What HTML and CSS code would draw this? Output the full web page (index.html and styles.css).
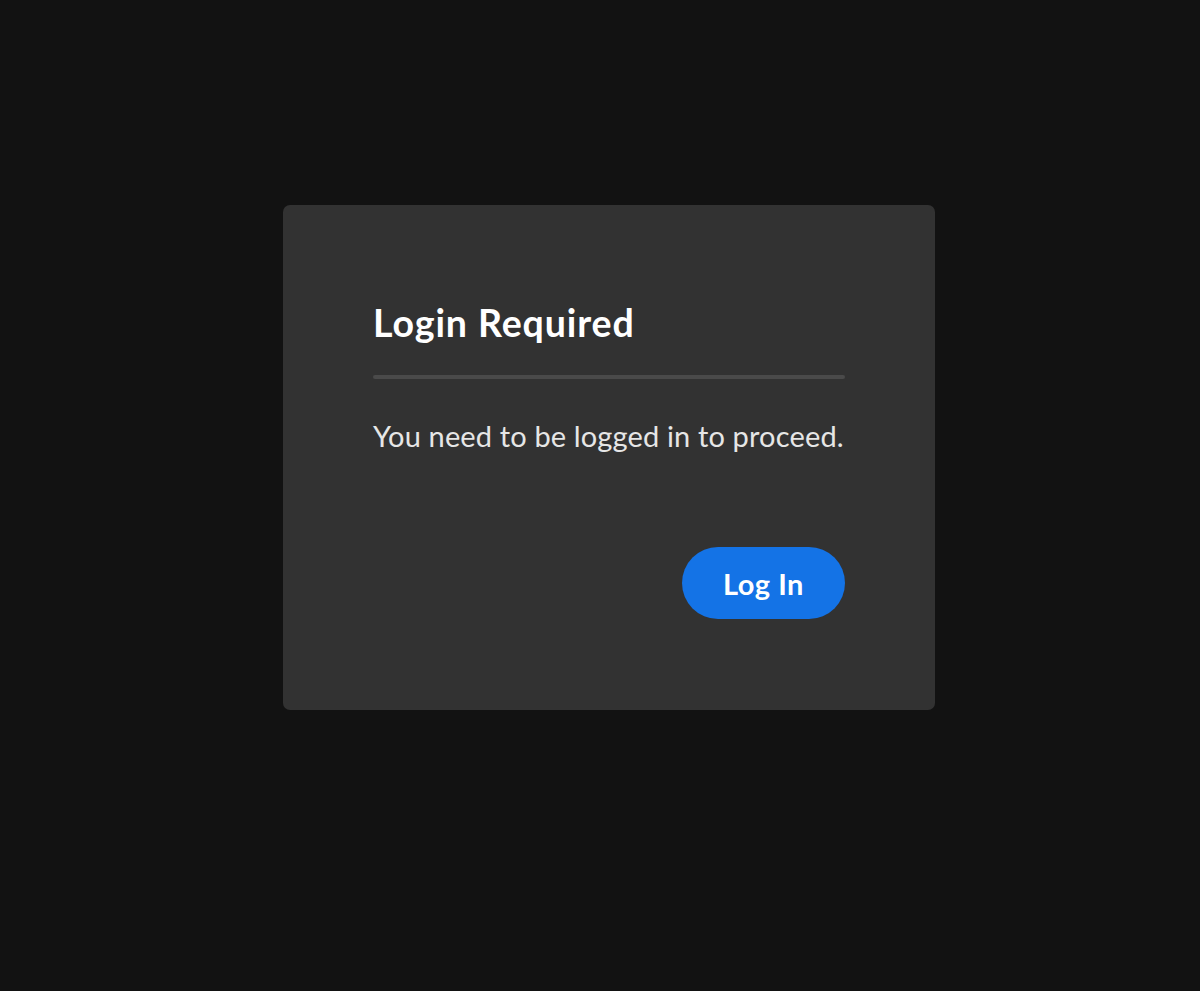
FILE: index.html
```html
<!DOCTYPE html>
<html lang="en">
<head>
<meta charset="utf-8">
<title>Login Required</title>
<link rel="stylesheet" href="styles.css">
</head>
<body>
<div class="stage">
  <section class="dialog" role="dialog" aria-labelledby="dlg-title">
    <h2 class="dialog-title" id="dlg-title">Login Required</h2>
    <hr class="dialog-divider">
    <p class="dialog-body">You need to be logged in to proceed.</p>
    <div class="dialog-actions">
      <button class="btn-primary" type="button">Log In</button>
    </div>
  </section>
</div>
</body>
</html>
```

FILE: styles.css
```css
html, body {
  margin: 0;
  padding: 0;
  background: #121212;
  height: 100%;
}

body {
  font-family: Lato, "Open Sans", "Liberation Sans", sans-serif;
  color: #fff;
}

.stage {
  display: flex;
  align-items: flex-start;
  padding: 205px 0 0 283px;
}

.dialog {
  width: 652px;
  box-sizing: border-box;
  background: #323232;
  border-radius: 7px;
  padding: 96px 90px 91px;
  display: flex;
  flex-direction: column;
}

.dialog-title {
  margin: 0;
  font-size: 37.5px;
  line-height: 44px;
  letter-spacing: 0.9px;
  font-weight: 700;
  color: #ffffff;
  white-space: nowrap;
}

.dialog-divider {
  margin: 30px 0 0;
  border: 0;
  height: 4px;
  border-radius: 2px;
  background: #4a4a4a;
}

.dialog-body {
  margin: 37px 0 0;
  font-size: 29px;
  line-height: 40px;
  letter-spacing: 0.15px;
  color: #e6e6e6;
  white-space: nowrap;
}

.dialog-actions {
  display: flex;
  justify-content: flex-end;
  margin-top: 91px;
}

.btn-primary {
  height: 72px;
  width: 163px;
  padding: 0;
  border: 0;
  border-radius: 36px;
  background: #1473e6;
  color: #fff;
  font-family: inherit;
  font-size: 29px;
  letter-spacing: 0.5px;
  font-weight: 700;
  cursor: pointer;
}
```
